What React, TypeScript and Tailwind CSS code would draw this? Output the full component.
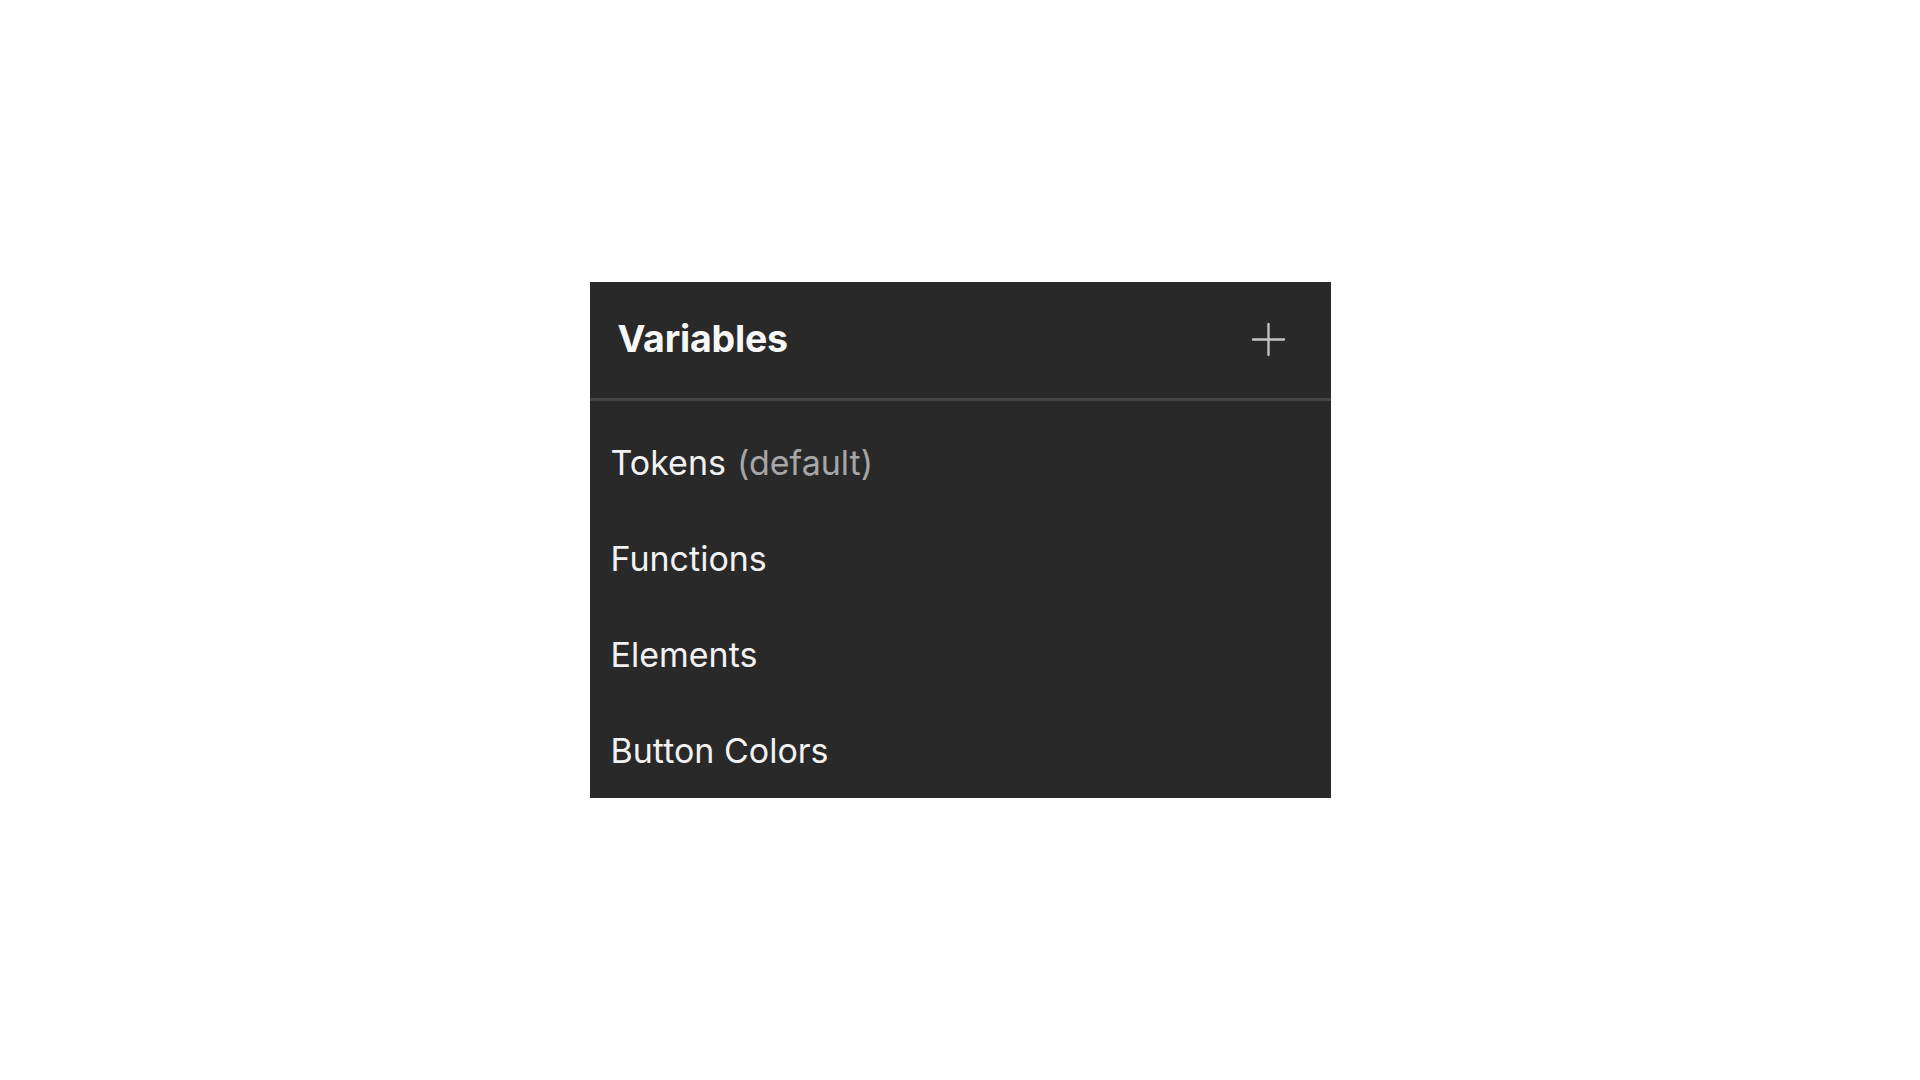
const items = [
  { name: "Tokens", note: "(default)" },
  { name: "Functions" },
  { name: "Elements" },
  { name: "Button Colors" },
];

function PlusIcon() {
  return (
    <svg width="35" height="35" viewBox="0 0 36 36" fill="none" stroke="currentColor" strokeWidth="2.4" strokeLinecap="round">
      <path d="M18 2v32M2 18h32" />
    </svg>
  );
}

export default function App() {
  return (
    <div
      className="flex h-screen w-full items-center justify-center bg-white"
      style={{ fontFamily: "Inter, 'Noto Sans', sans-serif" }}
    >
      <div className="flex w-[741px] flex-col bg-[#292929]">
        <header className="flex h-[119px] items-center justify-between border-b-[3px] border-[#454545] pb-[2px] pl-[28px] pr-[45px]">
          <h1 className="text-[37.5px] font-bold tracking-[-0.2px] text-[#f7f7f7]">Variables</h1>
          <button className="flex items-center justify-center text-[#c4c4c4]">
            <PlusIcon />
          </button>
        </header>

        <ul className="flex flex-col pt-[13px]">
          {items.map((item) => (
            <li key={item.name} className="flex h-[96px] items-center gap-[11px] px-[21px] text-[34px] text-[#f2f2f2]">
              <span>{item.name}</span>
              {item.note && <span className="text-[#a6a6a6]">{item.note}</span>}
            </li>
          ))}
        </ul>
      </div>
    </div>
  );
}
